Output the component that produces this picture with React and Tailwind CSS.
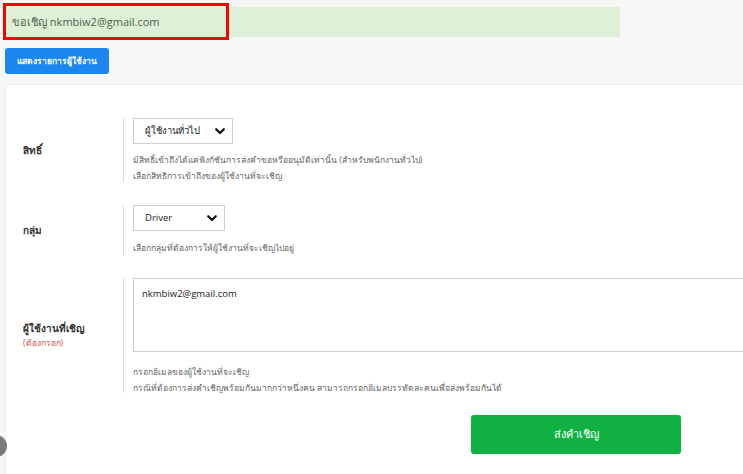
const Chevron = () => (
  <svg width="10" height="7" viewBox="0 0 10 7" className="shrink-0">
    <path d="M1.2 1.2 L5 5 L8.8 1.2" fill="none" stroke="#111" strokeWidth="2.2" strokeLinecap="round" strokeLinejoin="round" />
  </svg>
);

const FakeSelect = ({ label, width }) => (
  <div className={`${width} h-[26px] border border-[#cfcfcf] bg-white flex items-center justify-between pl-[11px] pr-[7px] text-[9.5px] text-[#222]`}>
    <span>{label}</span>
    <Chevron />
  </div>
);

const Row = ({ label, required, children, className }) => (
  <div className={`flex ${className}`}>
    <div className="w-[117px] shrink-0 flex flex-col justify-center pl-[17px]">
      <div className="text-[10px] font-bold text-[#333]">{label}</div>
      {required && <div className="text-[8.5px] text-[#d9534f] mt-[1px]">(ต้องกรอก)</div>}
    </div>
    <div className="flex-1 border-l border-[#dcdcdc] pl-[9px]">{children}</div>
  </div>
);

export default function App() {
  return (
    <div className="relative w-[743px] h-[474px] overflow-hidden bg-[#f7f7f5] font-['Open_Sans','Noto_Sans','DejaVu_Sans',sans-serif]">
      <div className="pt-[7px] pl-[5px]">
        <div className="w-[615px] h-[30px] bg-[#dff0d8] flex items-center pl-[7px] text-[11px] text-[#4b6348]">
          ขอเชิญ nkmbiw2@gmail.com
        </div>
        <button className="mt-[11px] w-[104px] h-[26px] rounded-[3px] bg-[#1b87ee] text-white text-[8.5px] font-semibold">
          แสดงรายการผู้ใช้งาน
        </button>
      </div>

      <div className="mt-[10px] ml-[5px] w-[780px] h-[400px] bg-white border border-[#ececec] rounded-tl-[4px] pt-[33px]">
        <Row label="สิทธิ์" className="h-[64px]">
          <FakeSelect label="ผู้ใช้งานทั่วไป" width="w-[100px]" />
          <div className="mt-[8px] text-[8.5px] leading-[16px] text-[#666]">
            <div>มีสิทธิ์เข้าถึงได้แค่ฟังก์ชันการส่งคำขอหรืออนุมัติเท่านั้น (สำหรับพนักงานทั่วไป)</div>
            <div>เลือกสิทธิการเข้าถึงของผู้ใช้งานที่จะเชิญ</div>
          </div>
        </Row>

        <Row label="กลุ่ม" className="h-[51px] mt-[23px]">
          <FakeSelect label="Driver" width="w-[92px]" />
          <div className="mt-[9px] text-[8.5px] leading-[16px] text-[#666]">
            เลือกกลุ่มที่ต้องการให้ผู้ใช้งานที่จะเชิญไปอยู่
          </div>
        </Row>

        <Row label="ผู้ใช้งานที่เชิญ" required className="h-[115px] mt-[22px]">
          <div className="h-[74px] border border-[#cfcfcf] pl-[8px] pt-[8px] text-[9.5px] text-[#222]">
            nkmbiw2@gmail.com
          </div>
          <div className="mt-[12px] text-[8.5px] leading-[16px] text-[#666]">
            <div>กรอกอีเมลของผู้ใช้งานที่จะเชิญ</div>
            <div>กรณีที่ต้องการส่งคำเชิญพร้อมกันมากกว่าหนึ่งคน สามารถกรอกอีเมลบรรทัดละคนเพื่อส่งพร้อมกันได้</div>
          </div>
        </Row>

        <div className="pl-[465px] mt-[22px]">
          <button className="w-[210px] h-[39px] rounded-[3px] bg-[#10b142] text-white text-[11px]">
            ส่งคำเชิญ
          </button>
        </div>
      </div>

      <div className="absolute left-[3px] top-[3px] w-[226px] h-[37px] border-[3px] border-[#ff0000]" />
      <div className="absolute left-[-15px] top-[435px] w-[22px] h-[22px] rounded-full bg-[#7a7a7a]" />
    </div>
  );
}
